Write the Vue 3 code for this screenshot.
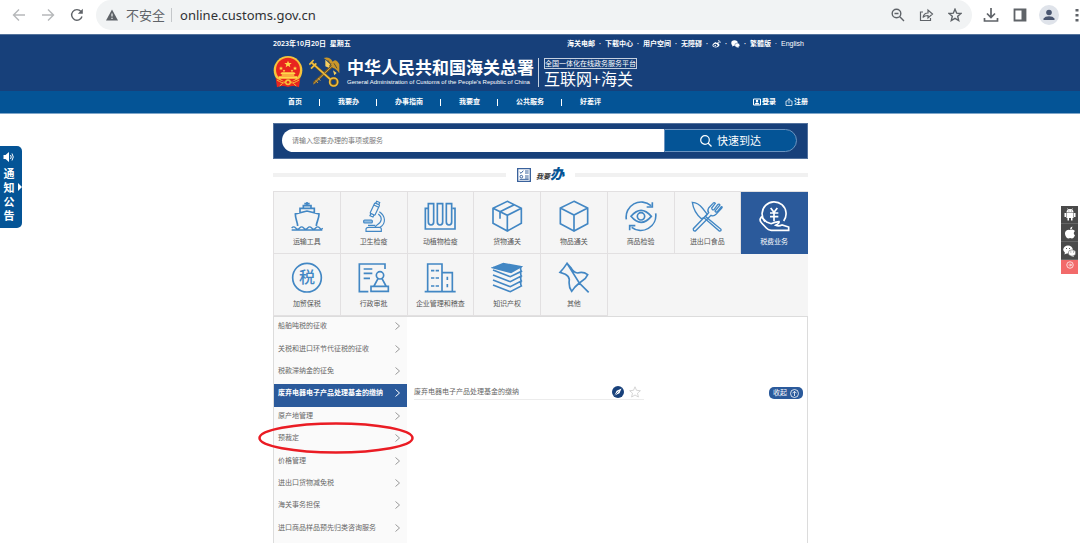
<script setup>
import { ref } from 'vue'

const keyword = ref('')
const address = ref('online.customs.gov.cn')
const navItems = ['首页', '我要办', '办事指南', '我要查', '公共服务', '好差评']
const activeTile = ref('税费业务')
const activeMenu = ref(3)

const tiles = [
  { name: '运输工具', art: '<path d="M48 6V18M40 11H56M37 25V17H60V25M27 40V25H70V40M20 78C20 66 13 58 13 42L48 33L84 42C84 58 76 66 76 78"/><path d="M2 84q6-7 12 0t12 0t12 0t12 0t12 0t12 0t12 0t9 0M2 90h92" stroke-width="4"/>' },
  { name: '卫生检疫', art: '<g stroke-width="3.5"><g transform="rotate(25 50 26)"><rect x="43" y="10" width="16" height="34" rx="2"/><path d="M46 10V3H56V10M46 44V51H56V44M43 17H59"/></g><path d="M64 35C84 48 84 72 66 82M61 42C74 52 72 66 58 74L50 82"/><rect x="17" y="60" width="26" height="9" rx="3" fill="#8fbbe0"/><path d="M24 94V88Q24 82 32 82H64Q70 82 70 88V94ZM30 76H52"/></g>' },
  { name: '动植物检疫', art: '<path d="M12 25H4V87H93V25H86M13 11H29V66Q29 75 21 75Q13 75 13 66ZM40 11H56V66Q56 75 48 75Q40 75 40 66ZM67 11H83V66Q83 75 75 75Q67 75 67 66Z"/>' },
  { name: '货物通关', art: '<path d="M49 4L91 25V70L49 93L6 70V25ZM6 25L49 46L91 25M49 46V93M70 14L27 35V56"/>' },
  { name: '物品通关', art: '<path d="M48 4L89 24V71L48 93L7 71V24ZM7 24L48 45L89 24M48 45V93"/>' },
  { name: '商品检验', art: '<path d="M18 49Q48 13 79 49Q48 85 18 49Z"/><circle cx="48" cy="49" r="11"/><path d="M4 58A45 45 0 0 1 78 17M82 7V21H65M92 40A45 45 0 0 1 20 82M14 91V77H31"/>' },
  { name: '进出口食品', art: '<g stroke-width="4"><path d="M4 7Q22 8 34 24L49 43L43 49L90 88Q91 94 85 93L39 53L31 56Q8 36 4 7Z"/><path d="M66 10L53 24Q48 32 53 38L7 86Q6 94 13 93L60 46Q68 50 75 43L91 26M66 10Q70 6 73 10L62 24Q63 31 69 29L80 14Q84 10 87 15L72 33Q74 38 79 35L91 20Q96 20 91 26"/></g>' },
  { name: '税费业务', art: '<path d="M21 65A36 36 0 1 1 77 63"/><path d="M38 24L48 37L58 24M48 37V64M36 39H61M36 50H61"/><path d="M10 51Q2 60 11 69L25 84Q30 90 40 91H92V81L72 75Q62 80 53 76Q65 69 63 65Q50 66 39 71L26 66Z"/>' },
  { name: '加贸保税', art: '<circle cx="48" cy="47" r="43"/><text x="48" y="64" font-size="48" font-weight="500" text-anchor="middle" stroke="none" fill="currentColor">税</text>' },
  { name: '行政审批', art: '<path d="M81 21V6H4V89H31M17 21H43M17 34H43M17 49H36M60 50L48 72M72 50L84 72M39 73H91V88H39Z"/><circle cx="66" cy="40" r="11"/>' },
  { name: '企业管理和稽查', art: '<path d="M2 89H95M11 89V6H54V89M54 32H85V89"/><path d="M21 26H31M35 26H45M21 48H31M35 48H45M21 72H31M35 72H45M70 44V54M70 66V76" stroke-width="5"/>' },
  { name: '知识产权', art: '<path d="M6 17L37 5L90 14L60 31Z" fill="currentColor"/><path d="M90 14Q87 22 91 28L58 44L6 24M91 28Q87 36 91 42L58 59L6 39M91 42Q87 50 91 57L58 74L6 54M91 57Q87 65 91 72L58 89L6 69"/>' },
  { name: '其他', art: '<path d="M27 4L40 19Q46 31 59 33Q76 28 89 38L82 49L64 63L92 91M64 63Q50 74 41 88Q31 75 34 53Q33 43 22 37L6 31Q18 18 27 4Z"/>' }
]

const menu = [
  '船舶吨税的征收', '关税和进口环节代征税的征收', '税款滞纳金的征免', '废弃电器电子产品处理基金的缴纳',
  '原产地管理', '预裁定', '价格管理', '进出口货物减免税', '海关事务担保', '进口商品样品预先归类咨询服务'
]
</script>

<template>
  <div class="page">
    <div class="browser">
      <button class="ghost faint" aria-label="后退"><svg width="14" height="14" viewBox="0 0 14 14"><path d="M13 7H2M7 1.500L1.500 7L7 12.500" /></svg></button>
      <button class="ghost faint" aria-label="前进"><svg width="14" height="14" viewBox="0 0 14 14"><path d="M1 7H12M7 1.500L12.500 7L7 12.500" /></svg></button>
      <button class="ghost reload" aria-label="刷新"><svg width="14" height="14" viewBox="0 0 14 14"><path d="M12 8.500A5.300 5.300 0 1 1 11 3.500" /><path d="M12.800 .800V5.800H7.800Z" class="solid" /></svg></button>
      <div class="omnibox">
        <svg width="12" height="12" viewBox="0 0 12 12"><path d="M6 .500L12 11.500H0Z" fill="#5f6368" /><path d="M6 4.500V7.500M6 8.700V10" stroke="#f1f3f4" stroke-width="1.200" /></svg>
        <span class="insecure">不安全</span>
        <input v-model="address" class="address" aria-label="地址栏">
        <button class="ghost" aria-label="缩小"><svg width="14" height="14" viewBox="0 0 14 14"><circle cx="5.500" cy="5.500" r="4.300" /><path d="M8.800 8.800L13 13M3.500 5.500H7.500" /></svg></button>
        <button class="ghost" aria-label="分享"><svg width="15" height="14" viewBox="0 0 15 14"><path d="M4 4H1.500V12.500H11.500V10M4 9.500C4.500 6.500 6 5 9 5V2L13.500 6L9 10V7.500C6.500 7.500 5 8 4 9.500Z" stroke-width="1.200" /></svg></button>
        <button class="ghost" aria-label="收藏"><svg width="14" height="14" viewBox="0 0 14 14"><path d="M7 1.200L8.700 5.200L13 5.500L9.700 8.300L10.700 12.500L7 10.300L3.300 12.500L4.300 8.300L1 5.500L5.300 5.200Z" /></svg></button>
      </div>
      <button class="ghost" aria-label="下载"><svg width="16" height="16" viewBox="0 0 16 16"><path d="M8 1V10M4 6.500L8 10.500L12 6.500M1.500 11V14H14.500V11" stroke-width="1.700" /></svg></button>
      <button class="ghost" aria-label="侧边栏"><svg width="14" height="14" viewBox="0 0 14 14"><path d="M1.500 1.500H12.500V12.500H1.500Z" stroke-width="1.800" /><path d="M8.500 1H13V13H8.500Z" class="solid" /></svg></button>
      <button class="ghost avatar" aria-label="用户"><svg width="12" height="12" viewBox="0 0 12 12"><circle cx="6" cy="3.500" r="2.800" class="solid" /><path d="M.500 11V9.500Q2 7.200 6 7.200T11.500 9.500V11Z" class="solid" /></svg></button>
      <button class="ghost dots" aria-label="菜单"><svg width="4" height="14" viewBox="0 0 4 14"><path d="M.500 1h3v2.500h-3zM.500 6h3v2.500h-3zM.500 11h3v2.500h-3z" class="solid" /></svg></button>
    </div>

    <header class="header">
      <div class="wrap">
        <div class="topline">
          <span>2023年10月20日&nbsp; 星期五</span>
          <nav class="links">
            <a href="#">海关电邮</a><a href="#">下载中心</a><a href="#">用户空间</a><a href="#">无障碍</a>
            <a href="#" aria-label="微博"><svg width="9" height="8" viewBox="0 0 18 16"><path d="M8 4C3 5 0 9 1 12C3 16 14 16 15 10C15 8 13 8 13 7C13 4 10 5 9 6Z" fill="#fff" /><ellipse cx="7" cy="10.500" rx="4" ry="3" fill="#17407a" /><circle cx="6.500" cy="10.800" r="1.500" fill="#fff" /><path d="M12 1Q17 1 16.500 6M12 4Q14 4 14 6" fill="none" stroke="#fff" stroke-width="1.500" /></svg></a>
            <a href="#" aria-label="微信"><svg width="9" height="8" viewBox="0 0 18 16"><ellipse cx="7" cy="6" rx="6.500" ry="5.500" fill="#fff" /><path d="M3 9L2 13L7 11ZM14 13L16 16L11 14Z" fill="#fff" /><ellipse cx="12.500" cy="10.500" rx="5" ry="4.300" fill="#fff" stroke="#17407a" stroke-width=".800" /></svg></a>
            <a href="#">繁體版</a><a href="#" class="en">English</a>
          </nav>
        </div>
        <div class="brand">
          <svg width="30" height="32" viewBox="0 0 90 96">
            <circle cx="45" cy="43" r="43" fill="#f5c33b" /><circle cx="45" cy="41" r="36" fill="#e8251f" />
            <path d="M45 14l3 7h8l-6 5 2 8-7-5-7 5 2-8-6-5h8z" fill="#ffd84a" />
            <path d="M24 31l2 4h4l-3 3 1 4-4-2-4 2 1-4-3-3h4zM66 31l2 4h4l-3 3 1 4-4-2-4 2 1-4-3-3h4zM33 40l1 3h3l-2 2 1 3-3-2-3 2 1-3-2-2h3zM57 40l1 3h3l-2 2 1 3-3-2-3 2 1-3-2-2h3z" fill="#ffd84a" />
            <path d="M22 54H68L64 49H26ZM26 55H64V59H26ZM17 61H73V68H17Z" fill="#ffd84a" />
            <path d="M8 66Q28 78 45 78T82 66L78 94Q62 86 45 93Q28 86 12 94Z" fill="#e8251f" />
            <circle cx="45" cy="79" r="9" fill="#f5c33b" /><circle cx="45" cy="79" r="4" fill="#e8251f" />
            <path d="M12 72Q28 83 36 80M78 72Q62 83 54 80M20 90L29 82M70 90L61 82" fill="none" stroke="#f5c33b" stroke-width="3" />
          </svg>
          <svg class="keys" width="31" height="32" viewBox="0 0 93 96">
            <g fill="none" stroke="#7a5a1c" stroke-width="8"><path d="M10 22L64 70M72 28L14 82" /><circle cx="74" cy="78" r="11" /></g>
            <g fill="none" stroke="#eebd3f" stroke-width="5"><path d="M8 20L64 70M1 26L14 12M6 38L22 22" /><circle cx="74" cy="78" r="12" /></g>
            <path d="M74 26L13 84M27 66L34 74M20 73L27 81" fill="none" stroke="#c9a04a" stroke-width="3" />
            <path d="M44 6Q62 1 71 17Q80 5 91 25L91 52Q82 38 72 36Q62 28 58 16Z" fill="#c9962a" />
            <path d="M49 11L65 26L59 35L49 31ZM72 43L83 51L76 58Z" fill="#f5cf61" />
            <path d="M57 13L67 29M75 22L84 37M66 22L62 30" stroke="#5c5238" stroke-width="3" />
          </svg>
          <div class="names"><strong>中华人民共和国海关总署</strong><span>General Administration of Customs of the People's Republic of China</span></div>
          <div class="platform"><small>全国一体化在线政务服务平台</small><b>互联网+海关</b></div>
        </div>
      </div>
    </header>

    <div class="navbar">
      <div class="wrap navrow">
        <nav class="nav"><a v-for="item in navItems" :key="item" href="#">{{ item }}</a></nav>
        <div class="account">
          <a href="#"><svg width="8" height="8" viewBox="0 0 16 16"><path d="M1 2H15V14H1Z" fill="none" stroke="#fff" stroke-width="2" /><circle cx="8" cy="6" r="2.500" fill="#fff" /><path d="M3 13Q4 9 8 9T13 13Z" fill="#fff" /></svg>登录</a>
          <a href="#"><svg width="8" height="8" viewBox="0 0 16 16"><path d="M5 6H2V15H14V6H11M8 11V2M5 5L8 1L11 5" fill="none" stroke="#fff" stroke-width="1.500" /></svg>注册</a>
        </div>
      </div>
    </div>

    <main class="main">
      <form class="search" @submit.prevent>
        <input v-model="keyword" type="text" placeholder="请输入您要办理的事项或服务" aria-label="搜索事项或服务">
        <button type="submit"><svg width="12" height="12" viewBox="0 0 12 12"><circle cx="5" cy="5" r="4.300" /><path d="M8 8L11.500 11.500" /></svg>快速到达</button>
      </form>

      <h2 class="title">
        <svg width="14" height="14" viewBox="0 0 42 42"><path d="M2 2H40V40H2Z" fill="none" stroke="#3a629c" stroke-width="4" /><path d="M8 12L12 16L19 8M24 9H35M24 15H35M24 24H35M24 30H35M8 34H35" fill="none" stroke="#3a629c" stroke-width="3" /><circle cx="13" cy="26" r="4" fill="none" stroke="#3a629c" stroke-width="3" /></svg>
        <span class="words">我要<em>办</em></span>
      </h2>

      <div class="tiles">
        <button v-for="t in tiles" :key="t.name" :class="{ on: t.name === activeTile }" @click="activeTile = t.name">
          <svg width="32" height="32" viewBox="0 0 96 96" fill="none" stroke="currentColor" stroke-width="5" v-html="t.art"></svg>
          <span>{{ t.name }}</span>
        </button>
      </div>

      <div class="panel">
        <ul class="menu">
          <li v-for="(m, i) in menu" :key="m">
            <a href="#" :class="{ on: i === activeMenu }" @click.prevent="activeMenu = i">{{ m }}<svg width="5" height="8" viewBox="0 0 5 8"><path d="M.500 .500L4.500 4L.500 7.500" fill="none" stroke="currentColor" /></svg></a>
            <svg v-if="m === '预裁定'" class="ring" viewBox="0 0 156 32" preserveAspectRatio="none"><ellipse cx="78" cy="16" rx="76.500" ry="14.500" fill="none" stroke="#ea1c24" stroke-width="2.500" /></svg>
          </li>
        </ul>
        <section class="detail">
          <div class="entry">
            <a href="#">{{ menu[3] }}</a>
            <button aria-label="办理指引"><svg width="12" height="12" viewBox="0 0 12 12"><circle cx="6" cy="6" r="6" fill="#17407a" /><path d="M9.500 2.500L7.500 7.300L2.500 9.500L4.600 4.700Z" fill="#fff" /><path d="M3 9L6.500 5.500" stroke="#17407a" stroke-width=".700" /></svg></button>
            <button aria-label="收藏事项"><svg width="12" height="12" viewBox="0 0 12 12"><path d="M6 .800L7.500 4.300L11.400 4.700L8.500 7.200L9.400 11L6 9L2.600 11L3.500 7.200L.600 4.700L4.500 4.300Z" fill="none" stroke="#ccc" stroke-width=".800" /></svg></button>
          </div>
          <button class="collapse">收起<svg width="9" height="9" viewBox="0 0 9 9"><circle cx="4.500" cy="4.500" r="4" /><path d="M4.500 7V2.500M2.500 4.300L4.500 2.300L6.500 4.300" /></svg></button>
        </section>
      </div>
    </main>

    <aside class="notice">
      <svg width="12" height="12" viewBox="0 0 24 24"><path d="M1 8H5L12 2V22L5 16H1Z" fill="#fff" /><path d="M15 8Q18 12 15 16M18 5Q23 12 18 19" fill="none" stroke="#fff" stroke-width="2" /></svg>
      <a href="#">通知公告</a>
      <i class="caret"></i>
    </aside>

    <aside class="apps">
      <a href="#" aria-label="安卓"><svg width="12" height="13" viewBox="0 0 24 26"><path d="M5 9A7 7 0 0 1 19 9ZM5 10H19V20H5ZM1 10H4V18H1ZM20 10H23V18H20ZM7 20H10V25H7ZM14 20H17V25H14Z" fill="#fff" /><path d="M7 1L9 4M17 1L15 4" stroke="#fff" stroke-width="1.500" /><path d="M9 6H10.500M14 6H15.500" stroke="#4a4a4a" stroke-width="1.500" /></svg></a>
      <a href="#" aria-label="苹果"><svg width="12" height="13" viewBox="0 0 24 26"><path d="M17 1Q17 6 12 7Q12 2 17 1ZM12 8Q18 5 22 10Q17 14 22 19Q19 25 16 25Q12 23 9 25C4 25 0 15 3 11Q6 6 12 8Z" fill="#fff" /></svg></a>
      <a href="#" aria-label="微信"><svg width="13" height="12" viewBox="0 0 26 24"><ellipse cx="10" cy="9" rx="9.500" ry="8" fill="#fff" /><path d="M4 14L3 19L9 16ZM20 20L22 24L16 22Z" fill="#fff" /><ellipse cx="18" cy="16" rx="7.500" ry="6.300" fill="#fff" stroke="#4a4a4a" /><path d="M6 7h2M12 7h2M15 14h1.500M20 14h1.500" stroke="#4a4a4a" stroke-width="1.800" /></svg></a>
      <a href="#" class="red" aria-label="收起工具栏"><svg width="8" height="8" viewBox="0 0 16 16" fill="none" stroke="#fff" stroke-width="1.500"><circle cx="8" cy="8" r="6.500" /><path d="M5 8H11M8 5L11 8L8 11" /></svg></a>
    </aside>
  </div>
</template>

<style>
body { background: #fff; }
</style>

<style scoped>
* { box-sizing: border-box; }
.page { position: relative; display: flex; flex-direction: column; min-height: 100vh; overflow: hidden; font: 7px/10px "Noto Sans", "Noto Sans CJK SC", sans-serif; color: #666; }
a { color: inherit; text-decoration: none; }
button { font: inherit; color: inherit; border: 0; background: none; padding: 0; cursor: pointer; }
svg { display: block; flex: none; }

.browser { display: flex; align-items: center; height: 34px; padding: 0 1px 4px 12px; background: #fff; }
.ghost svg { fill: none; stroke: #5f6368; stroke-width: 1.4; }
.ghost .solid { fill: #5f6368; stroke: none; }
.faint { margin-right: 15px; }
.faint svg { stroke: #b6b8ba; }
.reload { margin-right: 12px; }
.omnibox { flex: 1; display: flex; align-items: center; gap: 14px; height: 30px; padding: 0 10px; margin-right: 11px; background: #f1f3f4; border-radius: 15px; }
.insecure { margin-left: -6px; padding-right: 6px; border-right: 1px solid #c4c7ca; font-size: 13px; line-height: 14px; color: #5f6368; }
.address { flex: 1; min-width: 0; border: 0; padding: 0; margin-left: -6px; outline: 0; background: none; font: 13px/18px "Noto Sans", sans-serif; color: #303134; }
.avatar { display: grid; place-items: center; width: 20px; height: 20px; margin: 0 16px 0 12px; border-radius: 50%; background: #dfe3ea; }
.omnibox ~ .ghost + .ghost:not(.avatar):not(.dots) { margin-left: 14px; }
.avatar .solid { fill: #4a5670; }

.wrap { width: 535px; max-width: 100%; }
.header, .navbar { display: flex; justify-content: center; padding-left: 1px; color: #fff; }
.header { height: 57px; background: #17407a; border-top: 1px solid #54739c; }
.topline { display: flex; justify-content: space-between; padding: 4px 4px 0 0; font-weight: 600; }
.links { display: flex; align-items: center; }
.links a { display: flex; align-items: center; }
.links a + a::before { content: "·"; width: 10px; text-align: center; }
.en { font-family: "Liberation Sans", sans-serif; font-weight: 400; }
.brand { display: flex; align-items: center; height: 36px; margin-top: 5px; }
.keys { margin-left: 6px; }
.names { display: flex; flex-direction: column; margin: 0 4px 0 7px; white-space: nowrap; }
.names strong { font-size: 17px; line-height: 20px; }
.names span { font: 6px/9px "Liberation Sans", sans-serif; }
.platform { display: flex; flex-direction: column; align-items: flex-start; padding-left: 5px; border-left: 1px solid #c5d0df; white-space: nowrap; }
.platform small { font-size: 7px; line-height: 9px; border: 1px solid #c5d0df; }
.platform b { font: 16px/18px "Noto Sans CJK SC", sans-serif; }
.navbar { height: 23px; background: #045496; border-bottom: 1px solid #7fa6c9; }
.navrow { display: flex; align-items: center; justify-content: space-between; font-weight: 600; }
.nav { display: flex; padding-left: 15px; }
.nav a { display: flex; align-items: center; }
.nav a + a::before { content: ""; width: 1px; height: 7px; margin: 0 18px 0 17px; background: #fff; }
.account { display: flex; gap: 9px; }
.account a { display: flex; align-items: center; gap: 1px; }

.main { flex: 1; display: flex; flex-direction: column; width: 536px; max-width: 100%; margin: 9px auto 0; padding-left: 1px; }
.search { display: flex; height: 36px; padding: 5px 10px 6px 8px; background: #17407a; border: 1px solid #52719d; }
.search input { flex: 1; min-width: 0; border: 0; outline: 0; padding: 0 10px; border-radius: 12px 0 0 12px; background: #fff; font: inherit; color: #555; }
.search input::placeholder { color: #777; opacity: 1; }
.search button { display: flex; align-items: center; justify-content: center; gap: 5px; width: 133px; border: 1px solid #6b93bf; border-radius: 0 12px 12px 0; background: #045496; color: #fff; font-size: 11px; line-height: 14px; }
.search svg { fill: none; stroke: #fff; stroke-width: 1.2; }

.title { display: flex; align-items: center; height: 32px; margin: 0; font-size: 7px; line-height: 16px; }
.title::before, .title::after { content: ""; flex: 1; height: 4px; background: #f1f1f1; }
.title::before { margin-right: 11px; }
.title::after { margin-left: 11px; }
.words { padding-left: 5px; font-style: italic; color: #333; }
.words em { font-size: 14px; font-weight: 900; color: #045496; }

.tiles { display: grid; grid-template-columns: repeat(8, 1fr); grid-auto-rows: 62px; background: #f5f5f5; border: 1px solid #e2e0e1; border-width: 1px 0 0 1px; }
.tiles button { display: flex; flex-direction: column; align-items: center; gap: 5px; padding-top: 8px; color: #555; border: 1px solid #e2e0e1; border-width: 0 1px 1px 0; }
.tiles svg { color: #4287c4; }
.tiles span { white-space: nowrap; }
.tiles .on { background: #2b5a9b; border-color: #2b5a9b; color: #fff; }
.tiles .on svg { color: #fff; }

.panel { flex: 1; display: flex; border: 1px solid #dcdcdc; border-bottom: 0; }
.menu { width: 133px; margin: 0; padding: 0; list-style: none; display: grid; grid-template-rows: repeat(10, 1fr); height: 224px; background: #fafafa; box-shadow: 0 4px #fafafa; }
.menu li { position: relative; }
.menu a { display: flex; align-items: center; justify-content: space-between; height: 100%; padding: 0 7px 4px 4px; white-space: nowrap; }
.menu a svg { color: #999; }
.menu .on { background: #2b5a9b; color: #fff; font-weight: 600; }
.menu .on svg { color: #fff; }
.ring { position: absolute; left: -16px; top: -7px; width: 156px; height: 32px; pointer-events: none; }
.detail { flex: 1; display: flex; justify-content: space-between; align-items: flex-start; padding: 68px 4px 0 7px; }
.entry { display: flex; align-items: center; width: 230px; height: 15px; padding-right: 3px; gap: 5px; border-bottom: 1px solid #ececec; }
.entry a { flex: 1; }
.collapse { display: flex; align-items: center; justify-content: center; gap: 3px; width: 34px; height: 12px; margin-top: 2px; border-radius: 5px; background: #2b5a9b; color: #fff; }
.collapse svg { fill: none; stroke: #fff; stroke-width: .8; }

.notice { position: absolute; left: 0; top: 146px; display: flex; flex-direction: column; align-items: center; gap: 4px; width: 22px; height: 82px; padding: 5px 4px 0 0; background: #045496; border-radius: 0 5px 5px 0; }
.notice a { width: 11px; font-size: 11px; line-height: 14px; font-weight: 700; color: #fff; }
.caret { position: absolute; right: 0; top: 37px; border: solid transparent; border-width: 4px 0 4px 4px; border-left-color: #fff; }
.apps { position: absolute; right: 2px; top: 206px; display: flex; flex-direction: column; width: 17px; }
.apps a { display: grid; place-items: center; height: 18px; background: #4a4a4a; border-bottom: 1px solid #666; }
.apps .red { height: 14px; background: #f26a6a; border: 0; padding-bottom: 4px; }
</style>
